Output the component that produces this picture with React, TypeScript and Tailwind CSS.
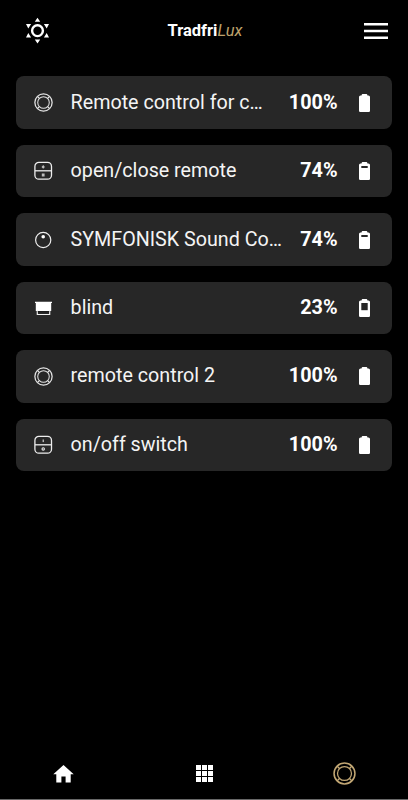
import React from 'react';

type IconName = 'ring' | 'openClose' | 'dial' | 'blind' | 'onOff';

interface Device {
  name: string;
  level: number;
  icon: IconName;
}

const devices: Device[] = [
  { name: 'Remote control for c…', level: 100, icon: 'ring' },
  { name: 'open/close remote', level: 74, icon: 'openClose' },
  { name: 'SYMFONISK Sound Co…', level: 74, icon: 'dial' },
  { name: 'blind', level: 23, icon: 'blind' },
  { name: 'remote control 2', level: 100, icon: 'ring' },
  { name: 'on/off switch', level: 100, icon: 'onOff' },
];

function Ring({ className }: { className: string }) {
  return (
    <svg viewBox="0 0 24 24" className={className} fill="none" stroke="currentColor">
      <circle cx="12" cy="12" r="10.9" strokeWidth="1.6" />
      <circle cx="12" cy="12" r="7.3" strokeWidth="1.3" />
      <path d="M4.4 4.4l2.4 2.4M19.6 4.4l-2.4 2.4M4.4 19.6l2.4-2.4M19.6 19.6l-2.4-2.4" strokeWidth="1.4" />
    </svg>
  );
}

function DeviceIcon({ name }: { name: IconName }) {
  if (name === 'ring') return <Ring className="size-[19px] text-[#e4e4e4]" />;
  return (
    <svg viewBox="0 0 20 20" className="size-5 text-[#eeeeee]" fill="none" stroke="currentColor">
      {name === 'dial' && (
        <>
          <circle cx="10.2" cy="10" r="7.6" strokeWidth="1.2" />
          <circle cx="10.2" cy="6.7" r="1.8" fill="white" stroke="none" />
        </>
      )}
      {name === 'blind' && (
        <>
          <path d="M2 3.8h17v1.3h-.8v7.8H2.8V5.1H2z" fill="white" stroke="none" />
          <path d="M4.3 12.5v4h12.4v-4" strokeWidth="1.2" />
          <path d="M4.8 13.7h11.4" stroke="#1a1a1a" strokeWidth="1.2" />
        </>
      )}
      {(name === 'openClose' || name === 'onOff') && (
        <>
          <rect x="1.9" y="1.4" width="16.6" height="16.8" rx="4" strokeWidth="1.3" />
          <path d="M2 9.8h16.5" strokeWidth="1.3" />
        </>
      )}
      {name === 'openClose' && (
        <path d="M10.2 4l1.7 1.9-1.7 1.8-1.7-1.8zM8.8 12.4h2.8v3H8.8z" fill="#bdbdbd" stroke="none" />
      )}
      {name === 'onOff' && (
        <>
          <path d="M10.2 4.5v2.6" strokeWidth="1" />
          <circle cx="10.2" cy="13.9" r="1.2" strokeWidth="1.1" />
        </>
      )}
    </svg>
  );
}

function Battery({ level }: { level: number }) {
  const hollow = level > 90 ? 0 : level > 50 ? 2 : 7.2;
  return (
    <svg viewBox="0 0 11 18" className="h-[18px] w-[11px] shrink-0">
      <path d="M3.4 0h4.2q.7 0 .9 1.5h1A1.5 1.5 0 0 1 11 3v13.8a1.2 1.2 0 0 1-1.2 1.2H1.2A1.2 1.2 0 0 1 0 16.8V3a1.5 1.5 0 0 1 1.5-1.5h1Q2.700 0 3.4 0z" fill="white" />
      {hollow > 0 && <rect x="2.3" y="4" width="6.4" height={hollow} fill="#272727" />}
    </svg>
  );
}

function DeviceCard({ device }: { device: Device }) {
  return (
    <li className="flex h-[52.3px] items-center rounded-lg bg-[#272727] pr-[22px] pl-[17px]">
      <div className="flex size-5 shrink-0 items-center justify-center">
        <DeviceIcon name={device.icon} />
      </div>
      <span className="ml-[17.6px] text-[19.7px] leading-6 whitespace-nowrap text-[#f4f4f4]">{device.name}</span>
      <span className="flex-1 text-right text-[19.8px] leading-6 font-bold text-white">{device.level}%</span>
      <div className="ml-[21px]">
        <Battery level={device.level} />
      </div>
    </li>
  );
}

export default function App() {
  return (
    <div className="flex h-[800px] w-[408px] flex-col overflow-hidden border-b border-[#686868] bg-black font-['Roboto',sans-serif] text-white">
      <header className="flex h-[62px] shrink-0 items-center justify-between pr-5 pl-[25px]">
        <svg viewBox="0 0 26 28" className="h-7 w-[26px]">
          <circle cx="12.5" cy="13.7" r="5.4" fill="none" stroke="white" strokeWidth="2.4" />
          <path d="M12.5 .8l2.7 4H9.8zM12.5 26.6l2.7-4H9.8zM1 7h5.1l-2.8 4.4zM24 7h-5.1l2.8 4.4zM1 20.4h5.1L3.3 16zM24 20.4h-5.1l2.8-4.4z" fill="white" />
        </svg>
        <h1 className="mr-[5px] text-[16.5px] leading-5 font-bold">
          Tradfri<span className="font-normal text-[#bda16b] italic">Lux</span>
        </h1>
        <svg viewBox="0 0 24 18" className="h-[18px] w-6 fill-white">
          <path d="M0 1h24v2.6H0zM0 7.7h24v2.6H0zM0 14.5h24v2.6H0z" />
        </svg>
      </header>
      <ul className="flex flex-1 flex-col gap-[16.2px] pt-[14.4px] pr-[16.5px] pl-4">
        {devices.map((device) => (
          <DeviceCard key={device.name} device={device} />
        ))}
      </ul>
      <nav className="flex h-[51px] shrink-0 items-center justify-between pr-[52px] pl-[53px]">
        <svg viewBox="0 0 21 18" className="h-[18px] w-[21px] fill-white">
          <path d="M10.5 .1L20.7 9.300h-3V17.500h-5.100v-6.100H8.400V17.500H3.300V9.300h-3z" />
        </svg>
        <svg viewBox="0 0 17 17" className="ml-0.5 h-[17px] w-[17px] fill-white">
          <path d="M0 0h5v5H0zM6 0h5v5H6zM12 0h5v5h-5zM0 6h5v5H0zM6 6h5v5H6zM12 6h5v5h-5zM0 12h5v5H0zM6 12h5v5H6zM12 12h5v5h-5z" />
        </svg>
        <Ring className="size-[23px] text-[#c2a774]" />
      </nav>
    </div>
  );
}
